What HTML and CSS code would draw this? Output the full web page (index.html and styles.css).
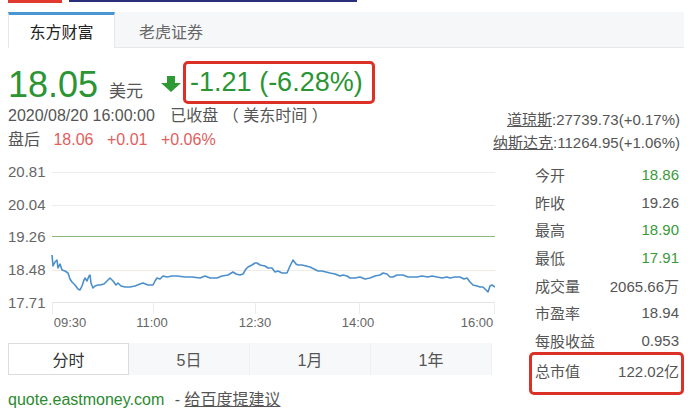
FILE: index.html
```html
<!DOCTYPE html>
<html>
    <head>
        <meta charset="UTF-8">
        <meta name="viewport" content="width=device-width, initial-scale=1.0">
        <title>东方财富 - 行情</title>
        <link rel="stylesheet" href="styles.css">
    </head>

    <body>
        <div class="top-strip">
            <span class="strip-red"></span>
            <span class="strip-blue"></span>
        </div>

        <div class="source-tabs">
            <div class="source-tab active">东方财富</div>
            <div class="source-tab">老虎证券</div>
        </div>

        <div class="price-row">
            <span class="price">18.05</span>
            <span class="currency">美元</span>
            <svg class="down-arrow" width="20" height="16" viewBox="0 0 20 16">
                <path d="M6 0 H14 V7 H20 L10 16 L0 7 H6 Z" fill="#2d9a33"/>
            </svg>
            <div class="change-box">-1.21 (-6.28%)</div>
        </div>

        <div class="quote-body">
            <div class="left-col">
                <div class="time-row">
                    <span>2020/08/20 16:00:00</span>
                    <span class="closed">已收盘</span>
                    <span class="tz">（ 美东时间 ）</span>
                </div>
                <div class="after-row">
                    <span>盘后</span>
                    <span class="red">18.06</span>
                    <span class="red">+0.01</span>
                    <span class="red">+0.06%</span>
                </div>

                <svg class="chart" width="487" height="175" viewBox="8 160 487 175">
                    <g stroke="#ececec" stroke-width="1">
                        <line x1="52" y1="172.5" x2="495" y2="172.5"/>
                        <line x1="52" y1="205.5" x2="495" y2="205.5"/>
                        <line x1="52" y1="270.5" x2="495" y2="270.5" stroke="#f1ebe4"/>
                        <line x1="52" y1="302.5" x2="495" y2="302.5" stroke="#e4e4e4"/>
                        <line x1="52.5" y1="302" x2="52.5" y2="314"/>
                        <line x1="153.5" y1="302" x2="153.5" y2="314"/>
                        <line x1="255.5" y1="302" x2="255.5" y2="314"/>
                        <line x1="359.5" y1="302" x2="359.5" y2="314"/>
                        <line x1="494.5" y1="302" x2="494.5" y2="314"/>
                    </g>
                    <line x1="52" y1="236.5" x2="495" y2="236.5" stroke="#8db87a" stroke-width="1.2"/>

                    <g class="axis-label" text-anchor="start">
                        <text x="8" y="177">20.81</text>
                        <text x="8" y="210">20.04</text>
                        <text x="8" y="242">19.26</text>
                        <text x="8" y="275">18.48</text>
                        <text x="8" y="308">17.71</text>
                    </g>
                    <g class="axis-label time" text-anchor="middle">
                        <text x="70" y="327">09:30</text>
                        <text x="152" y="327">11:00</text>
                        <text x="255" y="327">12:30</text>
                        <text x="358" y="327">14:00</text>
                        <text x="477" y="327">16:00</text>
                    </g>

                    <polyline fill="none" stroke="#4b8fcb" stroke-width="1.6" stroke-linejoin="round"
                        points="52,255 53,266 55,262 57,260 58,268 60,264 62,270 65,271 68,273 70,279 72,282 75,285 78,289 80,290 82,286 84,280 85,278 87,281 89,276 90,275 91,283 93,288 95,286 98,285 100,285 104,284 108,280 110,278 113,281 116,285 118,283 121,286 125,287 130,287 135,286 140,284 143,283 148,285 153,285 155,281 157,278 160,279 163,276 167,277 172,276 177,276 185,277 192,277 200,278 205,276 210,278 217,278 222,276 228,275 233,272 236,274 240,275 243,274 246,269 248,267 252,265 255,263 257,263 260,265 265,266 268,268 272,268 275,272 278,271 282,273 287,273 290,266 293,260 296,264 298,265 302,265 306,266 310,267 314,269 318,271 322,271 326,272 330,273 335,274 340,276 343,275 347,276 350,278 355,278 360,277 365,279 370,278 375,276 380,275 383,273 387,274 390,277 393,277 397,275 403,275 408,277 413,277 417,277 422,276 428,277 432,276 437,277 442,278 447,277 450,278 455,277 460,277 464,279 467,278 470,282 473,285 477,286 480,287 483,287 486,290 488,292 490,286 492,285 495,287"/>
                </svg>

                <div class="period-tabs">
                    <div class="period-tab active">分时</div>
                    <div class="period-tab">5日</div>
                    <div class="period-tab">1月</div>
                    <div class="period-tab">1年</div>
                </div>

                <div class="footer">
                    <span class="site">quote.eastmoney.com</span>
                    <span class="dash">-</span>
                    <span class="suggest">给百度提建议</span>
                </div>
            </div>

            <div class="right-col">
                <div class="index-row"><span><span class="index-name">道琼斯</span>:27739.73(+0.17%)</span></div>
                <div class="index-row"><span><span class="index-name">纳斯达克</span>:11264.95(+1.06%)</span></div>

                <div class="stats">
                    <div class="stat-row"><span>今开</span><span class="green">18.86</span></div>
                    <div class="stat-row"><span>昨收</span><span>19.26</span></div>
                    <div class="stat-row"><span>最高</span><span class="green">18.90</span></div>
                    <div class="stat-row"><span>最低</span><span class="green">17.91</span></div>
                    <div class="stat-row"><span>成交量</span><span>2065.66万</span></div>
                    <div class="stat-row"><span>市盈率</span><span>18.94</span></div>
                    <div class="stat-row"><span>每股收益</span><span>0.953</span></div>
                    <div class="stat-row boxed"><span>总市值</span><span>122.02亿</span></div>
                </div>
            </div>
        </div>
    </body>
</html>
```

FILE: styles.css
```css
body {
    margin: 0;
    padding: 0 6px 0 8px;
    background-color: white;
    color: #555;
    font-family: "Liberation Sans", "Noto Sans CJK SC", sans-serif;
    font-size: 15px;
    width: 690px;
    box-sizing: border-box;
    overflow: hidden;
}

.top-strip {
    display: flex;
    height: 3px;
}

.strip-red {
    width: 54px;
    height: 3px;
    background-color: #e23a2e;
}

.strip-blue {
    width: 288px;
    height: 2px;
    margin-left: 7px;
    background-color: #2a2f7a;
}

.source-tabs {
    display: flex;
    margin-top: 9px;
    height: 35px;
    background-color: #f6f7f9;
    border-bottom: 1px solid #e8e8e8;
}

.source-tab {
    width: 105px;
    display: flex;
    align-items: center;
    justify-content: center;
    font-size: 16px;
    color: #666;
    border-top: 3px solid transparent;
    padding-bottom: 1px;
}

.source-tab.active {
    background-color: white;
    color: #222;
    border-top-color: #4a96d2;
    border-left: 1px solid #e8e8e8;
    border-right: 1px solid #e8e8e8;
    margin-bottom: -1px;
}

.source-tab:nth-child(2) {
    width: 112px;
}

.price-row {
    display: flex;
    align-items: center;
    height: 47px;
    margin-top: 11px;
}

.price {
    font-size: 36px;
    color: #2a9532;
    line-height: 40px;
    margin-top: 4px;
}

.currency {
    font-size: 17px;
    color: #555;
    margin-left: 11px;
    margin-top: 14px;
}

.down-arrow {
    margin-left: 18px;
    margin-top: 3px;
}

.change-box {
    margin-left: 2px;
    height: 37px;
    padding: 0 9px 0 4px;
    border: 3px solid #dc3127;
    border-radius: 5px;
    font-size: 27px;
    line-height: 37px;
    color: #2a9532;
}

.quote-body {
    display: flex;
}

.left-col {
    width: 487px;
    flex-shrink: 0;
    display: flex;
    flex-direction: column;
}

.time-row {
    font-size: 16px;
    line-height: 20px;
    color: #555;
}

.time-row .closed {
    margin-left: 11px;
}

.after-row {
    font-size: 16px;
    line-height: 20px;
    margin-top: 4px;
}

.after-row .red {
    color: #e0605c;
    margin-left: 9px;
}

.chart {
    display: block;
    margin-top: 10px;
}

.axis-label {
    font-family: "Liberation Sans", sans-serif;
    font-size: 15px;
    fill: #666;
}

.axis-label.time {
    font-size: 13px;
}

.period-tabs {
    display: grid;
    grid-template-columns: repeat(4, 1fr);
    width: 484px;
    height: 32px;
    margin-top: 8px;
    background-color: #f7f8fa;
}

.period-tab {
    display: flex;
    align-items: center;
    justify-content: center;
    font-size: 16px;
    color: #555;
    border-right: 1px solid #f0f0f0;
}

.period-tab.active {
    background-color: white;
    color: #333;
    border: 1px solid #dcdcdc;
}

.footer {
    margin-top: 15px;
    font-size: 16px;
    line-height: 20px;
}

.footer .site {
    color: #2b8a30;
}

.footer .dash {
    margin-left: 6px;
    color: #555;
}

.footer .suggest {
    color: #555;
    text-decoration: underline;
}

.right-col {
    flex: 1;
    padding-top: 2px;
}

.index-row {
    display: flex;
    justify-content: flex-end;
    white-space: nowrap;
    margin-left: -14px;
    line-height: 23px;
    font-size: 15px;
    color: #555;
    padding-right: 4px;
}

.index-name {
    text-decoration: underline;
}

.stats {
    margin-top: 7px;
    margin-left: 34px;
}

.stat-row {
    display: flex;
    justify-content: space-between;
    align-items: center;
    height: 27.6px;
    padding: 0 2px 0 3px;
    border: 3px solid transparent;
    border-top: none;
    border-bottom: none;
    font-size: 15px;
    color: #555;
}

.stat-row .green {
    color: #3a9a3a;
}

.stat-row.boxed {
    border: 3px solid #dc3127;
    border-radius: 5px;
    height: 32px;
    margin-top: -2px;
    align-items: flex-start;
    padding-top: 5px;
}
```
